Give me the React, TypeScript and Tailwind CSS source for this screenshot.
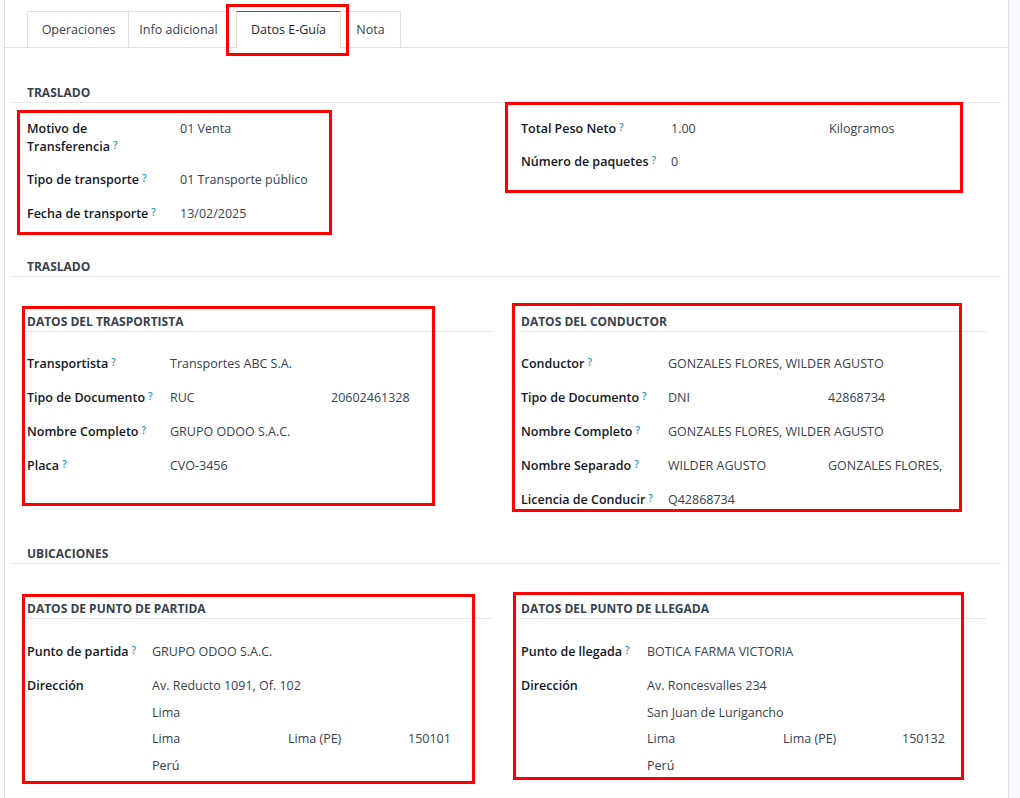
import React from "react";

const Q = () => (
  <sup className="ml-[3px] text-[10px] font-semibold text-[#2596c3] relative -top-[2px]">?</sup>
);

type Col = { t: string; w?: number };

function Row({
  label,
  q = true,
  lw,
  cols,
  pb = "pb-4",
}: {
  label: React.ReactNode;
  q?: boolean;
  lw: string;
  cols: Col[];
  pb?: string;
}) {
  return (
    <div className={`flex leading-[18px] ${pb}`}>
      <div className={`${lw} shrink-0 font-semibold text-[#111827]`}>
        {label}
        {q && <Q />}
      </div>
      {cols.map((c, i) => (
        <div key={i} className="shrink-0 text-[#374151]" style={c.w ? { width: c.w } : undefined}>
          {c.t}
        </div>
      ))}
    </div>
  );
}

function Heading({ children, top }: { children: React.ReactNode; top: string }) {
  return (
    <div
      className={`mx-[7px] ${top} pl-[15px] h-[19px] leading-[17px] border-b border-[#e5e7eb] font-bold text-[12px] text-[#374151]`}
    >
      {children}
    </div>
  );
}

function SubHeading({ children }: { children: React.ReactNode }) {
  return (
    <div className="h-[19px] leading-[17px] border-b border-[#e5e7eb] font-bold text-[12px] text-[#374151]">
      {children}
    </div>
  );
}

function Address({ lw, lines }: { lw: string; lines: Col[][] }) {
  return (
    <div className="flex leading-[18px]">
      <div className={`${lw} shrink-0 font-semibold text-[#111827]`}>Dirección</div>
      <div className="flex flex-col gap-[8.5px] text-[#374151]">
        {lines.map((l, i) => (
          <div key={i} className="flex">
            {l.map((c, j) => (
              <div key={j} className="shrink-0" style={c.w ? { width: c.w } : undefined}>
                {c.t}
              </div>
            ))}
          </div>
        ))}
      </div>
    </div>
  );
}

const Red = ({ cls }: { cls: string }) => (
  <div className={`absolute border-[3px] border-[#ff0000] pointer-events-none ${cls}`} />
);

export default function App() {
  return (
    <div className="relative w-[1020px] h-[798px] overflow-hidden bg-white flex text-[12.5px] font-['Open_Sans',sans-serif]">
      <div className="w-[5px] shrink-0 bg-[#f9fafb] border-r border-[#dee2e6]" />
      <main className="w-[1003px] shrink-0">
        {/* Tabs */}
        <div className="h-[48px] pt-[11px] pl-[22px] border-b border-[#dee2e6] flex items-start text-[12.5px]">
          <div className="w-[102px] h-[36px] pt-[1px] pl-[1px] border-l border-t border-r border-[#dee2e6] flex items-center justify-center text-[#374151]">
            Operaciones
          </div>
          <div className="w-[100px] h-[36px] pt-[1px] border-t border-r border-[#dee2e6] flex items-center justify-center text-[#374151]">
            Info adicional
          </div>
          <div className="ml-[7px] w-[105px] h-[37px] bg-white relative z-10 border-l border-r border-[#dee2e6] border-t border-t-[#5a5560] flex items-center justify-center text-[#1f2937]">
            Datos E-Guía
          </div>
          <div className="w-[60px] h-[36px] pt-[1px] border-t border-r border-[#dee2e6] flex items-center justify-center text-[#374151]">
            Nota
          </div>
        </div>

        {/* TRASLADO 1 */}
        <Heading top="mt-[36px]">TRASLADO</Heading>
        <div className="grid grid-cols-[465px_465px] gap-x-[29px] ml-[22px] mt-[17px] items-start">
          <div>
            <Row
              lw="w-[153px]"
              pb="pb-[15px]"
              label={
                <>
                  Motivo de
                  <br />
                  Transferencia
                </>
              }
              cols={[{ t: "01 Venta" }]}
            />
            <Row lw="w-[153px]" label="Tipo de transporte" cols={[{ t: "01 Transporte público" }]} />
            <Row lw="w-[153px]" label="Fecha de transporte" cols={[{ t: "13/02/2025" }]} />
          </div>
          <div>
            <Row
              lw="w-[150px]"
              pb="pb-[15px]"
              label="Total Peso Neto"
              cols={[{ t: "1.00", w: 158 }, { t: "Kilogramos" }]}
            />
            <Row lw="w-[150px]" pb="pb-[15px]" label="Número de paquetes" cols={[{ t: "0" }]} />
          </div>
        </div>

        {/* TRASLADO 2 */}
        <Heading top="mt-[19px]">TRASLADO</Heading>
        <div className="grid grid-cols-[465px_465px] gap-x-[29px] ml-[22px] mt-[36px] items-start">
          <div>
            <SubHeading>DATOS DEL TRASPORTISTA</SubHeading>
            <div className="mt-[23px]">
              <Row lw="w-[143px]" label="Transportista" cols={[{ t: "Transportes ABC S.A." }]} />
              <Row lw="w-[143px]" label="Tipo de Documento" cols={[{ t: "RUC", w: 161 }, { t: "20602461328" }]} />
              <Row lw="w-[143px]" label="Nombre Completo" cols={[{ t: "GRUPO ODOO S.A.C." }]} />
              <Row lw="w-[143px]" label="Placa" cols={[{ t: "CVO-3456" }]} />
            </div>
          </div>
          <div>
            <SubHeading>DATOS DEL CONDUCTOR</SubHeading>
            <div className="mt-[23px]">
              <Row lw="w-[147px]" label="Conductor" cols={[{ t: "GONZALES FLORES, WILDER AGUSTO" }]} />
              <Row lw="w-[147px]" label="Tipo de Documento" cols={[{ t: "DNI", w: 160 }, { t: "42868734" }]} />
              <Row lw="w-[147px]" label="Nombre Completo" cols={[{ t: "GONZALES FLORES, WILDER AGUSTO" }]} />
              <Row
                lw="w-[147px]"
                label="Nombre Separado"
                cols={[{ t: "WILDER AGUSTO", w: 160 }, { t: "GONZALES FLORES," }]}
              />
              <Row lw="w-[147px]" label="Licencia de Conducir" cols={[{ t: "Q42868734" }]} />
            </div>
          </div>
        </div>

        {/* UBICACIONES */}
        <Heading top="mt-[20px]">UBICACIONES</Heading>
        <div className="grid grid-cols-[465px_465px] gap-x-[29px] ml-[22px] mt-[36px] items-start">
          <div>
            <SubHeading>DATOS DE PUNTO DE PARTIDA</SubHeading>
            <div className="mt-[24px]">
              <Row lw="w-[125px]" label="Punto de partida" cols={[{ t: "GRUPO ODOO S.A.C." }]} />
              <Address
                lw="w-[125px]"
                lines={[
                  [{ t: "Av. Reducto 1091, Of. 102" }],
                  [{ t: "Lima" }],
                  [{ t: "Lima", w: 136 }, { t: "Lima (PE)", w: 120 }, { t: "150101" }],
                  [{ t: "Perú" }],
                ]}
              />
            </div>
          </div>
          <div>
            <SubHeading>DATOS DEL PUNTO DE LLEGADA</SubHeading>
            <div className="mt-[24px]">
              <Row lw="w-[126px]" label="Punto de llegada" cols={[{ t: "BOTICA FARMA VICTORIA" }]} />
              <Address
                lw="w-[126px]"
                lines={[
                  [{ t: "Av. Roncesvalles 234" }],
                  [{ t: "San Juan de Lurigancho" }],
                  [{ t: "Lima", w: 136 }, { t: "Lima (PE)", w: 119 }, { t: "150132" }],
                  [{ t: "Perú" }],
                ]}
              />
            </div>
          </div>
        </div>
      </main>
      <div className="flex-1 bg-[#f9fafb] border-l border-[#dee2e6]" />

      {/* annotation boxes */}
      <Red cls="left-[226px] top-[4px] w-[123px] h-[52px] z-20" />
      <Red cls="left-[17px] top-[110px] w-[315px] h-[125px] z-20" />
      <Red cls="left-[505px] top-[102px] w-[458px] h-[91px] z-20" />
      <Red cls="left-[22px] top-[306px] w-[413px] h-[200px] z-20" />
      <Red cls="left-[512px] top-[303px] w-[450px] h-[209px] z-20" />
      <Red cls="left-[22px] top-[594px] w-[453px] h-[190px] z-20" />
      <Red cls="left-[513px] top-[592px] w-[451px] h-[188px] z-20" />
    </div>
  );
}
